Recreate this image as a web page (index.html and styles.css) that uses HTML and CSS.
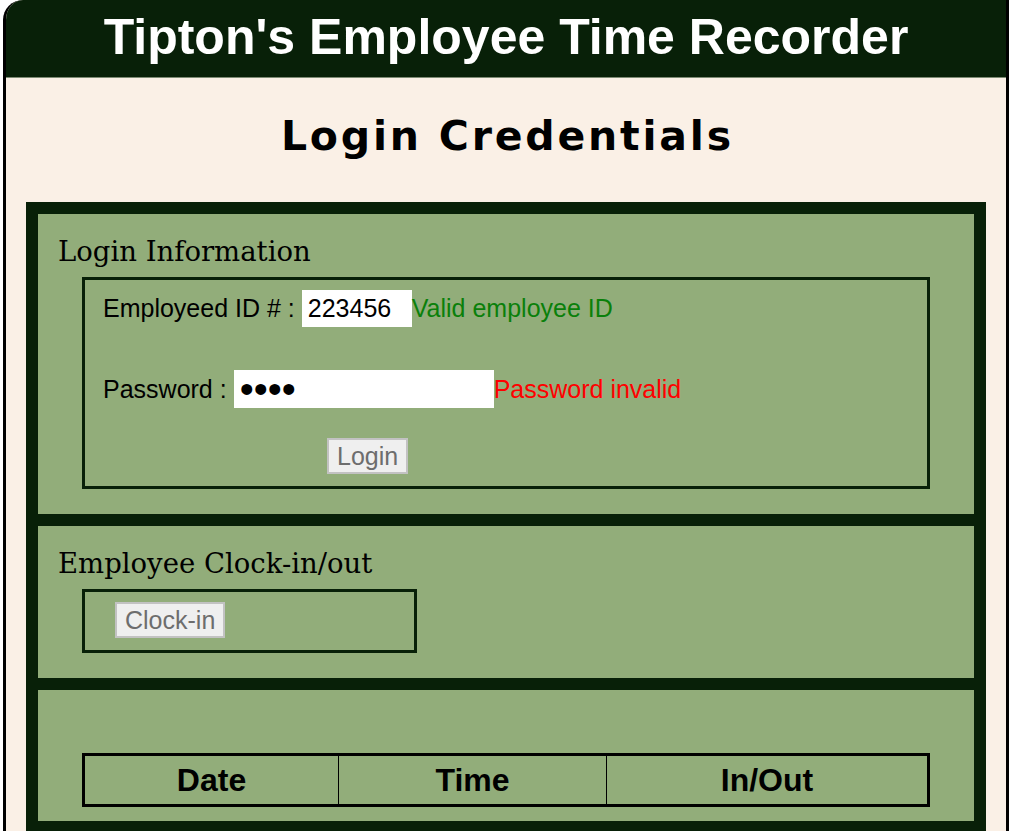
FILE: index.html
```html
<!DOCTYPE html>
<html lang="en">
<head>
<meta charset="utf-8">
<title>Tipton's Employee Time Recorder</title>
<link rel="stylesheet" href="styles.css">
</head>
<body>
<div class="page">
  <header class="masthead">
    <h1 class="title">Tipton's Employee Time Recorder</h1>
  </header>
  <main class="content">
    <h2 class="page-heading">Login Credentials</h2>
    <div class="panel-stack">
      <section class="panel">
        <h3 class="panel-title">Login Information</h3>
        <div class="fieldbox">
          <div class="form-row">
            <label class="field-label" for="empid">Employeed ID # :</label>
            <input id="empid" class="field field--id" type="text" value="223456">
            <span class="status status--ok">Valid employee ID</span>
          </div>
          <div class="form-row form-row--pw">
            <label class="field-label" for="pw">Password :</label>
            <input id="pw" class="field field--pw" type="password" value="abcd">
            <span class="status status--bad">Password invalid</span>
          </div>
          <div class="form-row form-row--action">
            <button class="btn" type="button" disabled>Login</button>
          </div>
        </div>
      </section>
      <section class="panel">
        <h3 class="panel-title">Employee Clock-in/out</h3>
        <div class="fieldbox fieldbox--clock">
          <button class="btn" type="button" disabled>Clock-in</button>
        </div>
      </section>
      <section class="panel panel--log">
        <div class="panel-title"></div>
        <table class="log-table">
          <thead>
            <tr>
              <th class="col-date">Date</th>
              <th class="col-time">Time</th>
              <th class="col-inout">In/Out</th>
            </tr>
          </thead>
        </table>
      </section>
    </div>
  </main>
</div>
</body>
</html>
```
FILE: styles.css
```css
* {
  box-sizing: border-box;
}

html {
  background: #ffffff;
}

body {
  margin: 0 3px;
  font-family: "Liberation Sans", Arial, sans-serif;
  color: #000;
}

.page {
  background: #faf0e6;
  border-left: 3px solid #000;
  border-right: 3px solid #000;
  border-top-left-radius: 20px;
  overflow: hidden;
}

.masthead {
  background: #082008;
  height: 78px;
  border-bottom: 1px solid #7d8b74;
}

.title {
  margin: 0;
  text-align: center;
  color: #fff;
  font: bold 50px/74px "Liberation Sans", Arial, sans-serif;
}

.content {
  padding: 0 20px;
}

.page-heading {
  margin: 0;
  height: 124px;
  padding-top: 33px;
  text-align: center;
  font: 700 41px/50px "DejaVu Sans", Lato, sans-serif;
  letter-spacing: 2.8px;
  text-indent: 2.8px;
  color: #000;
}

.panel-stack {
  background: #082008;
  padding: 12px;
  display: flex;
  flex-direction: column;
  gap: 12px;
}

.panel {
  background: #92ad7a;
  padding: 0 44px 25px 20px;
}

.panel--log {
  padding-bottom: 14px;
}

.panel-title {
  margin: 0;
  height: 63px;
  padding-top: 20px;
  font: normal 27.5px/34px "DejaVu Serif", Georgia, serif;
  color: #000;
}

.fieldbox {
  margin-left: 24px;
  border: 3px solid #082008;
  padding: 10px 0 12px 18px;
}

.fieldbox--clock {
  width: 335px;
  padding-left: 30px;
}

.form-row {
  display: flex;
  align-items: center;
  font-size: 25px;
}

.form-row--pw {
  margin-top: 43px;
}

.form-row--action {
  margin-top: 30px;
  padding-left: 224px;
}

.field-label {
  margin-right: 7px;
}

.field {
  border: none;
  border-radius: 0;
  outline: none;
  background: #fff;
  color: #000;
  font: 25px "Liberation Sans", Arial, sans-serif;
  padding: 0 6px;
  margin: 0;
}

.field--id {
  width: 110px;
  height: 37px;
}

.field--pw {
  width: 260px;
  height: 38px;
  font-size: 40px;
}

.status--ok {
  color: #0a800a;
}

.status--bad {
  color: #ff0000;
}

.btn {
  display: block;
  height: 36px;
  padding: 0 8px;
  margin: 0;
  font: 25px "Liberation Sans", Arial, sans-serif;
  color: #6d6d6d;
  background: #efefef;
  border: 2px solid #c2c2c2;
  border-radius: 0;
}

.log-table {
  margin-left: 24px;
  width: calc(100% - 24px);
  border-collapse: collapse;
  border: 3px solid #000;
}

.log-table th {
  border: 1px solid #000;
  border-top-width: 3px;
  border-bottom-width: 3px;
  font: bold 32px "Liberation Sans", Arial, sans-serif;
  height: 51px;
  padding: 0;
  text-align: center;
  vertical-align: middle;
}

.log-table .col-date {
  width: 255px;
  border-left-width: 3px;
}

.log-table .col-time {
  width: 268px;
}

.log-table .col-inout {
  border-right-width: 3px;
}
```
